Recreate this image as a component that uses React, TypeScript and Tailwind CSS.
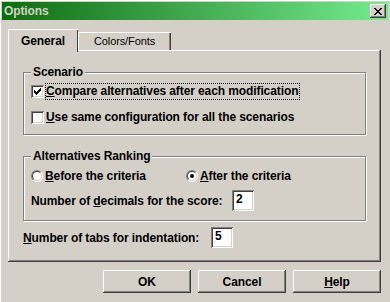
import React from 'react'

const raised =
  'shadow-[inset_-1px_-1px_0_#404040,inset_1px_1px_0_#ffffff,inset_-2px_-2px_0_#808080,inset_2px_2px_0_#d4d0c8]'
const sunken =
  'shadow-[inset_1px_1px_0_#808080,inset_-1px_-1px_0_#ffffff,inset_2px_2px_0_#404040,inset_-2px_-2px_0_#d4d0c8]'

function CloseButton() {
  return (
    <div className={`w-[16px] h-[14px] bg-[#d4d0c8] flex items-center justify-center ${raised}`}>
      <svg width="8" height="7" viewBox="0 0 8 7" shapeRendering="crispEdges">
        <path
          d="M0 0h2v1H0zM6 0h2v1H6zM1 1h2v1H1zM5 1h2v1H5zM2 2h4v1H2zM3 3h2v1H3zM2 4h4v1H2zM1 5h2v1H1zM5 5h2v1H5zM0 6h2v1H0zM6 6h2v1H6z"
          fill="#000"
        />
      </svg>
    </div>
  )
}

function Checkbox({ checked }: { checked?: boolean }) {
  return (
    <div className={`w-[13px] h-[13px] bg-white shrink-0 flex items-center justify-center ${sunken}`}>
      {checked && (
        <svg width="7" height="7" viewBox="0 0 7 7" shapeRendering="crispEdges">
          <path d="M6 0h1v3H6zM5 1h1v3H5zM4 2h1v3H4zM3 3h1v3H3zM2 4h1v3H2zM1 3h1v3H1zM0 2h1v3H0z" fill="#000" />
        </svg>
      )}
    </div>
  )
}

function Radio({ checked }: { checked?: boolean }) {
  return (
    <div className="w-[12px] h-[12px] rounded-full shrink-0 border border-t-[#808080] border-l-[#808080] border-r-white border-b-white">
      <div className="w-full h-full rounded-full bg-white border border-t-[#404040] border-l-[#404040] border-r-[#d4d0c8] border-b-[#d4d0c8] flex items-center justify-center">
        {checked && <div className="w-[4px] h-[4px] rounded-full bg-black" />}
      </div>
    </div>
  )
}

function Group({ label, children, className }: { label: string; children: React.ReactNode; className?: string }) {
  return (
    <div className={`relative border border-[#808080] shadow-[1px_1px_0_#ffffff,inset_1px_1px_0_#ffffff] ${className}`}>
      <span className="absolute -top-[8px] left-[7px] px-[2px] bg-[#d4d0c8] leading-[14px]">{label}</span>
      {children}
    </div>
  )
}

function EditBox({ value }: { value: string }) {
  return (
    <div className={`w-[22px] h-[21px] bg-white pl-[4px] pt-[3px] leading-[13px] ${sunken}`}>{value}</div>
  )
}

function Button({ children }: { children: React.ReactNode }) {
  return (
    <div className={`w-[88px] h-[23px] flex items-center justify-center ${raised}`}>{children}</div>
  )
}

export default function App() {
  return (
    <div className="w-[390px] h-[302px] bg-[#d4d0c8] font-['Liberation_Sans',Arial,sans-serif] text-[12px] font-bold tracking-[-0.1px] text-black shadow-[inset_1px_1px_0_#ffffff] overflow-hidden">
      {/* title bar */}
      <div className="mx-[2px] pt-[2px]">
        <div className="h-[18px] flex items-center justify-between pl-[2px] pr-[2px] bg-gradient-to-r from-[#0a6e0a] to-[#74ec90]">
          <span className="text-[12px] text-[#d4d0c8]">Options</span>
          <CloseButton />
        </div>
      </div>

      <div className="pl-[8px] pt-[9px]">
        {/* tabs */}
        <div className="flex items-end h-[21px] relative z-10">
          <div className="w-[70px] h-[23px] -mb-[2px] bg-[#d4d0c8] flex items-center justify-center pt-[1px] shadow-[inset_1px_1px_0_#ffffff,inset_-1px_0_0_#404040]">
            General
          </div>
          <div className="w-[93px] h-[18px] flex items-center justify-center font-normal text-[11px] pt-[1px] shadow-[inset_1px_1px_0_#ffffff,inset_-1px_0_0_#404040,inset_-2px_0_0_#808080]">
            Colors/Fonts
          </div>
        </div>

        {/* panel */}
        <div className="w-[373px] h-[212px] pl-[15px] pt-[22px] shadow-[inset_-1px_-1px_0_#404040,inset_1px_1px_0_#ffffff,inset_-2px_-2px_0_#808080]">
          <Group label="Scenario" className="w-[343px] h-[63px] pl-[7px] pt-[10px] flex flex-col gap-[9px]">
            <div className="flex items-center h-[17px]">
              <Checkbox checked />
              <span className="ml-[1px] border border-dotted border-black leading-[15px] pr-[1px]">
                <u>C</u>ompare alternatives after each modification
              </span>
            </div>
            <div className="flex items-center h-[17px]">
              <Checkbox />
              <span className="ml-[1px] border border-transparent leading-[15px]">
                <u>U</u>se same configuration for all the scenarios
              </span>
            </div>
          </Group>

          <Group label="Alternatives Ranking" className="mt-[21px] w-[343px] h-[65px] pl-[7px] pt-[10px] flex flex-col gap-[6px]">
            <div className="flex items-center h-[17px]">
              <div className="w-[155px] flex items-center">
                <Radio />
                <span className="ml-[2px]">
                  <u>B</u>efore the criteria
                </span>
              </div>
              <div className="flex items-center">
                <Radio checked />
                <span className="ml-[2px]">
                  <u>A</u>fter the criteria
                </span>
              </div>
            </div>
            <div className="flex items-center h-[21px]">
              <span className="w-[201px]">
                Number of <u>d</u>ecimals for the score:
              </span>
              <EditBox value="2" />
            </div>
          </Group>

          <div className="mt-[6px] flex items-center h-[21px]">
            <span className="w-[188px]">
              <u>N</u>umber of tabs for indentation:
            </span>
            <EditBox value="5" />
          </div>
        </div>

        {/* buttons */}
        <div className="w-[373px] mt-[8px] flex justify-end gap-[7px]">
          <Button>OK</Button>
          <Button>Cancel</Button>
          <Button>
            <span>
              <u>H</u>elp
            </span>
          </Button>
        </div>
      </div>
    </div>
  )
}
